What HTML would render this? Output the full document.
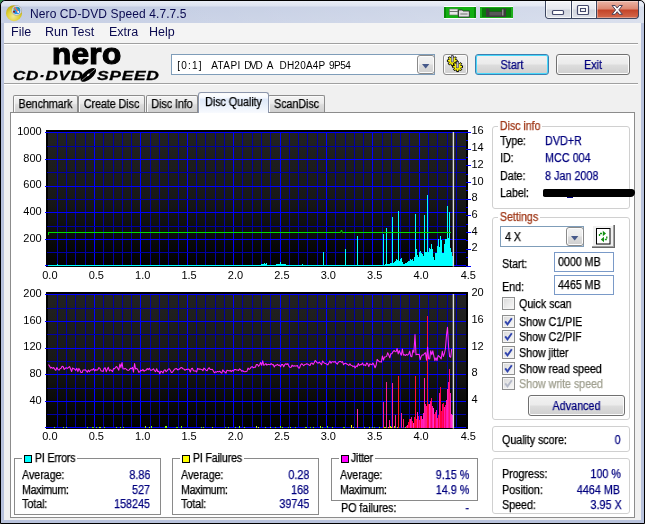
<!DOCTYPE html>
<html><head><meta charset="utf-8"><title>Nero CD-DVD Speed 4.7.7.5</title>
<style>
html,body{margin:0;padding:0;}
html{background:#fff}body{width:645px;height:524px;overflow:hidden;position:relative;background:#f0f0f0;font-family:"Liberation Sans",sans-serif;font-size:12px;color:#000;}
.abs{position:absolute;}
#frame{left:0;top:0;width:643px;height:522px;border:1px solid #000;border-radius:5px 5px 0 0;background:#b8c2dc;}
#titlebar{left:1px;top:1px;width:643px;height:22px;background:linear-gradient(to bottom,#e6ebf5 0,#d8dfee 5px,#c1cbe2 6px,#c6cfe4 21px);border-radius:5px 5px 0 0;}
#titlefade{left:1px;top:1px;width:643px;height:22px;background:linear-gradient(to right,rgba(255,255,255,0) 0,rgba(255,255,255,0.12) 40%,rgba(255,255,255,0.35) 100%);border-radius:5px 5px 0 0;}
#title{will-change:transform;left:30px;top:8px;line-height:13px;font-size:12px;color:#0a0a50;white-space:nowrap;letter-spacing:0.1px}
#client{left:4px;top:23px;width:637px;height:497px;background:#f0f0f0;}
#menubar{left:4px;top:23px;width:637px;height:20px;background:#f4f4f4;}
.menu{will-change:transform;top:25px;font-size:12.5px;color:#0a0a50;white-space:nowrap;}
.hsep{height:1px;background:#a0a0a0;border-bottom:1px solid #fff;}
.t{position:absolute;white-space:nowrap;font-size:12px;line-height:13px;letter-spacing:-0.1px;transform:scaleX(0.9);transform-origin:0 50%;will-change:transform;-webkit-text-stroke:0.25px currentColor;}
.v{color:#00007f;letter-spacing:0;}
.r{text-align:right;transform-origin:100% 50%;}
.c{text-align:center;transform-origin:50% 50%;}
.btn{letter-spacing:-0.2px;position:absolute;border:1px solid #707070;border-radius:3px;background:linear-gradient(to bottom,#f2f2f2 0,#ebebeb 48%,#dddddd 52%,#cfcfcf 100%);box-shadow:inset 0 0 0 1px #fcfcfc;text-align:center;color:#00007f;font-size:11px;box-sizing:border-box;}
.tab{letter-spacing:-0.25px;position:absolute;top:95px;height:17px;border:1px solid #8c8c8c;border-bottom:none;border-radius:2px 2px 0 0;background:linear-gradient(to bottom,#f3f3f3 0,#ebebeb 45%,#dcdcdc 55%,#d0d0d0 100%);box-shadow:inset 1px 1px 0 #fafafa;box-sizing:border-box;font-size:11px;text-align:center;line-height:16px;white-space:nowrap;}
.grp{position:absolute;border:1px solid #d0d0d0;border-radius:3px;box-sizing:border-box;}
.grp2{position:absolute;border:1px solid #8a8a8a;box-sizing:border-box;}
.gl{background:#fff;padding:0 2px;}
.edit{position:absolute;border:1px solid #7a9ac8;background:#fff;box-sizing:border-box;font-size:11px;}
.cb{position:absolute;width:11px;height:11px;border:1px solid #8e8f8f;background:linear-gradient(135deg,#d8d8d8,#fafafa);box-shadow:inset 0 0 0 1px #f4f4f4;}
.sw{position:absolute;width:8px;height:8px;border:1px solid #000;}
.lg{font-size:12px;font-weight:bold;font-style:italic;line-height:14px;color:#000;white-space:nowrap;transform-origin:0 0;letter-spacing:0.5px;-webkit-text-stroke:0.3px #000;}
</style></head><body>
<div class="abs" style="left:0;top:0;width:4px;height:4px;background:linear-gradient(135deg,#2f8a4a 0,#2f8a4a 45%,#3a6ab0 55%);"></div>
<div id="frame" class="abs"></div>
<div id="titlebar" class="abs"></div><div id="titlefade" class="abs"></div>
<!-- app icon -->
<svg class="abs" style="left:5px;top:4px" width="20" height="20" viewBox="0 0 20 20"><defs><radialGradient id="gd" cx="0.45" cy="0.7" r="0.7"><stop offset="0" stop-color="#f0e898"/><stop offset="0.55" stop-color="#dfd034"/><stop offset="1" stop-color="#b8a608"/></radialGradient></defs><circle cx="9" cy="9.200" r="8" fill="url(#gd)"/><circle cx="11.7" cy="6.400" r="4.900" fill="#e4e4e8" stroke="#a8a8ac" stroke-width=".7"/><circle cx="11.7" cy="6.400" r="3.600" fill="#2590e0"/><path d="M9.800 3.600 L13.200 8" stroke="#f07850" stroke-width="1.500" stroke-linecap="round"/><path d="M12.500 3.500l2 .3-.3 1.800z" fill="#2a9a30"/><circle cx="9" cy="7.700" r="1" fill="#901414"/><circle cx="8.600" cy="5.700" r=".7" fill="#f0e020"/><circle cx="13.200" cy="8" r=".9" fill="#fff"/></svg>
<div id="title" class="abs">Nero CD-DVD Speed 4.7.7.5</div>
<!-- caption buttons -->
<div class="abs" style="left:444px;top:6px;width:32px;height:13px;background:#12b012;border-top:1px solid #fff;border-bottom:1px solid #fff;box-sizing:border-box;box-shadow:inset 2px 0 0 #0a8a0a,inset -2px 0 0 #0a8a0a;"></div>
<svg class="abs" style="left:447px;top:8px" width="29" height="10" viewBox="0 0 24 10" preserveAspectRatio="none"><path d="M2 1h7v6H2z" fill="#e8e8e8" stroke="#707070" stroke-width=".6"/><path d="M2 3.5h7" stroke="#606060" stroke-width=".8"/><path d="M9.5 2h3l1 1h5v6h-9z" fill="#e0e0e0" stroke="#303030" stroke-width=".8"/><path d="M11 5h6v2h-6z" fill="#a8a8a8"/></svg>
<div class="abs" style="left:480px;top:6px;width:33px;height:13px;background:#0a7c0a;border:1px solid #fff;border-left:none;border-right:none;box-sizing:border-box;box-shadow:inset 2px 0 0 #1cae1c,inset -2px 0 0 #1cae1c,inset 0 1px 0 #1cae1c,inset 0 -1px 0 #1cae1c;"></div>
<svg class="abs" style="left:485px;top:8px" width="24" height="10" viewBox="0 0 24 10"><path d="M1 0.500h3.500v3h12V0.500h4.500v8.500H1z" fill="#3c3c3c"/><path d="M4.500 4h12v3.500h-12z" fill="#585858"/><path d="M17 1.5h1.5v6H17z" fill="#909090"/></svg>
<div class="abs" id="capbtns" style="left:545px;top:1px;width:94px;height:18px;border:1px solid #3c4660;border-top:none;border-radius:0 0 4px 4px;box-sizing:border-box;overflow:hidden;background:#3c4660;">
 <div class="abs" style="left:0;top:0;width:25px;height:17px;background:linear-gradient(to bottom,#f4f5f8 0,#e6e8ee 45%,#d2d6df 55%,#dfe2e9 100%);box-shadow:inset 0 0 0 1px rgba(255,255,255,.7);"></div>
 <div class="abs" style="left:26px;top:0;width:24px;height:17px;background:linear-gradient(to bottom,#f4f5f8 0,#e6e8ee 45%,#d2d6df 55%,#dfe2e9 100%);box-shadow:inset 0 0 0 1px rgba(255,255,255,.7);"></div>
 <div class="abs" style="left:51px;top:0;width:42px;height:17px;background:linear-gradient(to bottom,#eab5a6 0,#dc8a74 45%,#c4452a 55%,#d4694c 100%);box-shadow:inset 0 0 0 1px rgba(255,255,255,.35);"></div>
</div>
<svg class="abs" style="left:545px;top:0" width="94" height="19" viewBox="0 0 94 19"><rect x="7.5" y="10.5" width="11" height="4" rx="1" fill="#fff" stroke="#454a6c" stroke-width="1.2"/><rect x="32.5" y="5.500" width="11" height="9" rx="1" fill="#fff" stroke="#454a6c" stroke-width="1.2"/><rect x="35.500" y="8.500" width="5" height="3" fill="#fff" stroke="#454a6c" stroke-width="1.1"/><path d="M67 5.500h3.200l2 2.600 2-2.600h3.200l-3.600 4.400 3.600 4.400h-3.200l-2-2.600-2 2.600h-3.200l3.600-4.400z" fill="#fff" stroke="#4a4258" stroke-width="1"/></svg>
<div id="client" class="abs"></div>
<div id="menubar" class="abs"></div>
<div class="abs menu" style="left:11px">File</div>
<div class="abs menu" style="left:45px">Run Test</div>
<div class="abs menu" style="left:109px">Extra</div>
<div class="abs menu" style="left:149px">Help</div>
<div class="abs hsep" style="left:4px;top:43px;width:634px"></div>
<div class="abs hsep" style="left:4px;top:83px;width:634px"></div>

<!-- toolbar logo -->
<div class="abs" id="nero" style="left:51.5px;top:39.800px;font-size:29px;font-weight:bold;letter-spacing:0.3px;line-height:29px;color:#000;-webkit-text-stroke:1.2px #000;transform:scaleX(1.085);transform-origin:0 0;">nero</div>
<div class="abs lg" id="cd1" style="left:13px;top:69px;transform:scaleX(1.42);">CD·DVD</div>
<div class="abs lg" id="cd2" style="left:97px;top:69px;transform:scaleX(1.45);">SPEED</div>
<svg class="abs" style="left:78px;top:66px" width="20" height="18" viewBox="0 0 20 18"><g transform="rotate(-40 10.3 8.9)"><ellipse cx="10.3" cy="8.9" rx="9.4" ry="4.4" fill="#000"/><path d="M1.5 8.9 H19" stroke="#fff" stroke-width="0.6" opacity=".8"/><ellipse cx="10.3" cy="8.9" rx="1.6" ry="0.9" fill="#fff"/></g></svg>
<!-- combo -->
<div class="edit" style="left:171px;top:54px;width:264px;height:21px;border-color:#7f9db9;"></div>
<div class="abs" id="drive" style="will-change:transform;left:0;top:59px;font-size:10px;line-height:13px;white-space:nowrap;"><span class="abs" style="left:177.3px;top:0;letter-spacing:1.18px">[0:1]</span> <span class="abs" style="left:211.2px;top:0;letter-spacing:0.42px">ATAPI</span> <span class="abs" style="left:244.2px;top:0;letter-spacing:-1.31px">DVD</span> <span class="abs" style="left:266.8px;top:0;letter-spacing:0px">A</span> <span class="abs" style="left:279.5px;top:0;letter-spacing:0.21px">DH20A4P</span> <span class="abs" style="left:329px;top:0;letter-spacing:-0.52px">9P54</span></div>
<div class="btn" style="left:417px;top:55px;width:18px;height:19px;border-color:#8a8a8a;border-radius:3px;"></div>
<svg class="abs" style="left:422px;top:64px" width="8" height="5"><path d="M0 0H7.400L3.700 4.500Z" fill="#46598a"/></svg>
<div class="btn" style="left:443px;top:54px;width:25px;height:21px;border-color:#8c8c8c;"></div>
<svg class="abs" style="left:444px;top:54px" width="24" height="21" viewBox="0 0 24 21"><polygon points="13.2,5.9 13.2,7.7 12.0,7.7 11.5,8.8 12.4,9.7 11.2,10.9 10.3,10.0 9.2,10.5 9.2,11.7 7.4,11.7 7.4,10.5 6.3,10.0 5.4,10.9 4.2,9.7 5.1,8.8 4.6,7.7 3.4,7.7 3.4,5.9 4.6,5.9 5.1,4.8 4.2,3.9 5.4,2.7 6.3,3.6 7.4,3.1 7.4,1.9 9.2,1.9 9.2,3.1 10.3,3.6 11.2,2.7 12.4,3.9 11.5,4.8 12.0,5.9" fill="#000" stroke="#000" stroke-width="1" stroke-linejoin="round"/><polygon points="12.7,6.0 12.7,7.6 11.4,7.5 11.0,8.5 12.0,9.4 10.9,10.5 10.0,9.5 9.0,9.9 9.1,11.2 7.5,11.2 7.6,9.9 6.6,9.5 5.7,10.5 4.6,9.4 5.6,8.5 5.2,7.5 3.9,7.6 3.9,6.0 5.2,6.1 5.6,5.1 4.6,4.2 5.7,3.1 6.6,4.1 7.6,3.7 7.5,2.4 9.1,2.4 9.0,3.7 10.0,4.1 10.9,3.1 12.0,4.2 11.0,5.1 11.4,6.1" fill="#f6f010"/><rect x="7.2" y="1.8" width="2.200" height="6.200" fill="#b8b8d0" stroke="#282838" stroke-width=".5"/><polygon points="18.5,11.8 18.5,13.6 17.3,13.6 16.8,14.7 17.7,15.6 16.5,16.8 15.6,15.9 14.5,16.4 14.5,17.6 12.7,17.6 12.7,16.4 11.6,15.9 10.7,16.8 9.5,15.6 10.4,14.7 9.9,13.6 8.7,13.6 8.7,11.8 9.9,11.8 10.4,10.7 9.5,9.8 10.7,8.6 11.6,9.5 12.7,9.0 12.7,7.8 14.5,7.8 14.5,9.0 15.6,9.5 16.5,8.6 17.7,9.8 16.8,10.7 17.3,11.8" fill="#000" stroke="#000" stroke-width="1" stroke-linejoin="round"/><polygon points="18.0,11.9 18.0,13.5 16.7,13.4 16.3,14.4 17.3,15.3 16.2,16.4 15.3,15.4 14.3,15.8 14.4,17.1 12.8,17.1 12.9,15.8 11.9,15.4 11.0,16.4 9.9,15.3 10.9,14.4 10.5,13.4 9.2,13.5 9.2,11.9 10.5,12.0 10.9,11.0 9.9,10.1 11.0,9.0 11.9,10.0 12.9,9.6 12.8,8.3 14.4,8.3 14.3,9.6 15.3,10.0 16.2,9.0 17.3,10.1 16.3,11.0 16.7,12.0" fill="#f6f010"/><rect x="12.5" y="7.7" width="2.200" height="6.200" fill="#b8b8d0" stroke="#282838" stroke-width=".5"/></svg>
<div class="btn" style="left:475px;top:54px;width:74px;height:21px;border-color:#3c7fb1;box-shadow:inset 0 0 0 1px #48d8fb;"></div><div class="t v c" style="left:475px;width:74px;top:59px;">Start</div>
<div class="btn" style="left:556px;top:54px;width:74px;height:21px;"></div><div class="t v c" style="left:556px;width:74px;top:59px;">Exit</div>
<!-- tabs -->
<div class="tab" style="left:13px;width:65px;"></div><div class="t c" style="left:13px;width:65px;top:98px;">Benchmark</div>
<div class="tab" style="left:78px;width:67px;"></div><div class="t c" style="left:78px;width:67px;top:98px;">Create Disc</div>
<div class="tab" style="left:146px;width:52px;"></div><div class="t c" style="left:146px;width:52px;top:98px;">Disc Info</div>
<div class="tab" style="left:268px;width:57px;"></div><div class="t c" style="left:268px;width:57px;top:98px;">ScanDisc</div>
<div class="abs" id="pane" style="left:10px;top:112px;width:625px;height:406px;border:1px solid #8c8c8c;box-sizing:border-box;background:#fff;"></div>
<div class="tab" style="left:198px;top:92px;width:71px;height:21px;background:linear-gradient(to bottom,#fff 0,#f6f9fe 22%,#dfe9f9 32%,#e8f0fb 60%,#f8fafe 100%);border-color:#8c96ac;border-radius:3px 3px 0 0;"></div><div class="t c" style="left:198px;width:71px;top:96px;">Disc Quality</div>
<svg id="charts" width="645" height="524" viewBox="0 0 645 524" style="position:absolute;left:0;top:0;will-change:transform" font-family="Liberation Sans, sans-serif" font-size="11" fill="#000">
<defs><linearGradient id="g1" x1="0" y1="0" x2="0" y2="1"><stop offset="0" stop-color="#222"/><stop offset="0.5" stop-color="#181818"/><stop offset="1" stop-color="#000"/></linearGradient></defs>
<g shape-rendering="crispEdges">
<rect x="46" y="130" width="422" height="137" fill="#000"/>
<rect x="48" y="132" width="418" height="134" fill="url(#g1)"/>
<rect x="57" y="132" width="1" height="134" fill="#0000a4"/>
<rect x="66" y="132" width="1" height="134" fill="#0000a4"/>
<rect x="75" y="132" width="1" height="134" fill="#0000a4"/>
<rect x="85" y="132" width="1" height="134" fill="#0000a4"/>
<rect x="94" y="132" width="1" height="134" fill="#0000ff"/>
<rect x="103" y="132" width="1" height="134" fill="#0000a4"/>
<rect x="113" y="132" width="1" height="134" fill="#0000a4"/>
<rect x="122" y="132" width="1" height="134" fill="#0000a4"/>
<rect x="131" y="132" width="1" height="134" fill="#0000a4"/>
<rect x="140" y="132" width="1" height="134" fill="#0000ff"/>
<rect x="150" y="132" width="1" height="134" fill="#0000a4"/>
<rect x="159" y="132" width="1" height="134" fill="#0000a4"/>
<rect x="168" y="132" width="1" height="134" fill="#0000a4"/>
<rect x="178" y="132" width="1" height="134" fill="#0000a4"/>
<rect x="187" y="132" width="1" height="134" fill="#0000ff"/>
<rect x="196" y="132" width="1" height="134" fill="#0000a4"/>
<rect x="205" y="132" width="1" height="134" fill="#0000a4"/>
<rect x="215" y="132" width="1" height="134" fill="#0000a4"/>
<rect x="224" y="132" width="1" height="134" fill="#0000a4"/>
<rect x="233" y="132" width="1" height="134" fill="#0000ff"/>
<rect x="242" y="132" width="1" height="134" fill="#0000a4"/>
<rect x="252" y="132" width="1" height="134" fill="#0000a4"/>
<rect x="261" y="132" width="1" height="134" fill="#0000a4"/>
<rect x="270" y="132" width="1" height="134" fill="#0000a4"/>
<rect x="280" y="132" width="1" height="134" fill="#0000ff"/>
<rect x="289" y="132" width="1" height="134" fill="#0000a4"/>
<rect x="298" y="132" width="1" height="134" fill="#0000a4"/>
<rect x="307" y="132" width="1" height="134" fill="#0000a4"/>
<rect x="317" y="132" width="1" height="134" fill="#0000a4"/>
<rect x="326" y="132" width="1" height="134" fill="#0000ff"/>
<rect x="335" y="132" width="1" height="134" fill="#0000a4"/>
<rect x="345" y="132" width="1" height="134" fill="#0000a4"/>
<rect x="354" y="132" width="1" height="134" fill="#0000a4"/>
<rect x="363" y="132" width="1" height="134" fill="#0000a4"/>
<rect x="372" y="132" width="1" height="134" fill="#0000ff"/>
<rect x="382" y="132" width="1" height="134" fill="#0000a4"/>
<rect x="391" y="132" width="1" height="134" fill="#0000a4"/>
<rect x="400" y="132" width="1" height="134" fill="#0000a4"/>
<rect x="409" y="132" width="1" height="134" fill="#0000a4"/>
<rect x="419" y="132" width="1" height="134" fill="#0000ff"/>
<rect x="428" y="132" width="1" height="134" fill="#0000a4"/>
<rect x="437" y="132" width="1" height="134" fill="#0000a4"/>
<rect x="447" y="132" width="1" height="134" fill="#0000a4"/>
<rect x="456" y="132" width="1" height="134" fill="#0000a4"/>
<rect x="45" y="265" width="421" height="1" fill="#0000ff"/>
<rect x="47" y="252" width="419" height="1" fill="#0000a4"/>
<rect x="45" y="239" width="421" height="1" fill="#0000ff"/>
<rect x="47" y="226" width="419" height="1" fill="#0000a4"/>
<rect x="45" y="212" width="421" height="1" fill="#0000ff"/>
<rect x="47" y="199" width="419" height="1" fill="#0000a4"/>
<rect x="45" y="186" width="421" height="1" fill="#0000ff"/>
<rect x="47" y="172" width="419" height="1" fill="#0000a4"/>
<rect x="45" y="159" width="421" height="1" fill="#0000ff"/>
<rect x="47" y="146" width="419" height="1" fill="#0000a4"/>
<rect x="45" y="132" width="421" height="1" fill="#0000ff"/>
<rect x="46" y="292" width="422" height="137" fill="#000"/>
<rect x="48" y="294" width="418" height="134" fill="url(#g1)"/>
<rect x="57" y="294" width="1" height="134" fill="#0000a4"/>
<rect x="66" y="294" width="1" height="134" fill="#0000a4"/>
<rect x="75" y="294" width="1" height="134" fill="#0000a4"/>
<rect x="85" y="294" width="1" height="134" fill="#0000a4"/>
<rect x="94" y="294" width="1" height="134" fill="#0000ff"/>
<rect x="103" y="294" width="1" height="134" fill="#0000a4"/>
<rect x="113" y="294" width="1" height="134" fill="#0000a4"/>
<rect x="122" y="294" width="1" height="134" fill="#0000a4"/>
<rect x="131" y="294" width="1" height="134" fill="#0000a4"/>
<rect x="140" y="294" width="1" height="134" fill="#0000ff"/>
<rect x="150" y="294" width="1" height="134" fill="#0000a4"/>
<rect x="159" y="294" width="1" height="134" fill="#0000a4"/>
<rect x="168" y="294" width="1" height="134" fill="#0000a4"/>
<rect x="178" y="294" width="1" height="134" fill="#0000a4"/>
<rect x="187" y="294" width="1" height="134" fill="#0000ff"/>
<rect x="196" y="294" width="1" height="134" fill="#0000a4"/>
<rect x="205" y="294" width="1" height="134" fill="#0000a4"/>
<rect x="215" y="294" width="1" height="134" fill="#0000a4"/>
<rect x="224" y="294" width="1" height="134" fill="#0000a4"/>
<rect x="233" y="294" width="1" height="134" fill="#0000ff"/>
<rect x="242" y="294" width="1" height="134" fill="#0000a4"/>
<rect x="252" y="294" width="1" height="134" fill="#0000a4"/>
<rect x="261" y="294" width="1" height="134" fill="#0000a4"/>
<rect x="270" y="294" width="1" height="134" fill="#0000a4"/>
<rect x="280" y="294" width="1" height="134" fill="#0000ff"/>
<rect x="289" y="294" width="1" height="134" fill="#0000a4"/>
<rect x="298" y="294" width="1" height="134" fill="#0000a4"/>
<rect x="307" y="294" width="1" height="134" fill="#0000a4"/>
<rect x="317" y="294" width="1" height="134" fill="#0000a4"/>
<rect x="326" y="294" width="1" height="134" fill="#0000ff"/>
<rect x="335" y="294" width="1" height="134" fill="#0000a4"/>
<rect x="345" y="294" width="1" height="134" fill="#0000a4"/>
<rect x="354" y="294" width="1" height="134" fill="#0000a4"/>
<rect x="363" y="294" width="1" height="134" fill="#0000a4"/>
<rect x="372" y="294" width="1" height="134" fill="#0000ff"/>
<rect x="382" y="294" width="1" height="134" fill="#0000a4"/>
<rect x="391" y="294" width="1" height="134" fill="#0000a4"/>
<rect x="400" y="294" width="1" height="134" fill="#0000a4"/>
<rect x="409" y="294" width="1" height="134" fill="#0000a4"/>
<rect x="419" y="294" width="1" height="134" fill="#0000ff"/>
<rect x="428" y="294" width="1" height="134" fill="#0000a4"/>
<rect x="437" y="294" width="1" height="134" fill="#0000a4"/>
<rect x="447" y="294" width="1" height="134" fill="#0000a4"/>
<rect x="456" y="294" width="1" height="134" fill="#0000a4"/>
<rect x="45" y="427" width="421" height="1" fill="#0000ff"/>
<rect x="47" y="414" width="419" height="1" fill="#0000a4"/>
<rect x="45" y="401" width="421" height="1" fill="#0000ff"/>
<rect x="47" y="388" width="419" height="1" fill="#0000a4"/>
<rect x="45" y="374" width="421" height="1" fill="#0000ff"/>
<rect x="47" y="361" width="419" height="1" fill="#0000a4"/>
<rect x="45" y="348" width="421" height="1" fill="#0000ff"/>
<rect x="47" y="334" width="419" height="1" fill="#0000a4"/>
<rect x="45" y="321" width="421" height="1" fill="#0000ff"/>
<rect x="47" y="308" width="419" height="1" fill="#0000a4"/>
<rect x="45" y="294" width="421" height="1" fill="#0000ff"/>
<rect x="48" y="265" width="1" height="1" fill="#00ffff"/>
<rect x="49" y="265" width="1" height="1" fill="#00ffff"/>
<rect x="50" y="265" width="1" height="1" fill="#00ffff"/>
<rect x="51" y="265" width="1" height="1" fill="#00ffff"/>
<rect x="52" y="265" width="1" height="1" fill="#00ffff"/>
<rect x="53" y="265" width="1" height="1" fill="#00ffff"/>
<rect x="54" y="265" width="1" height="1" fill="#00ffff"/>
<rect x="55" y="265" width="1" height="1" fill="#00ffff"/>
<rect x="56" y="265" width="1" height="1" fill="#00ffff"/>
<rect x="57" y="264" width="1" height="2" fill="#00ffff"/>
<rect x="58" y="265" width="1" height="1" fill="#00ffff"/>
<rect x="59" y="265" width="1" height="1" fill="#00ffff"/>
<rect x="60" y="265" width="1" height="1" fill="#00ffff"/>
<rect x="61" y="265" width="1" height="1" fill="#00ffff"/>
<rect x="62" y="265" width="1" height="1" fill="#00ffff"/>
<rect x="63" y="265" width="1" height="1" fill="#00ffff"/>
<rect x="64" y="265" width="1" height="1" fill="#00ffff"/>
<rect x="65" y="265" width="1" height="1" fill="#00ffff"/>
<rect x="66" y="265" width="1" height="1" fill="#00ffff"/>
<rect x="67" y="265" width="1" height="1" fill="#00ffff"/>
<rect x="68" y="265" width="1" height="1" fill="#00ffff"/>
<rect x="69" y="265" width="1" height="1" fill="#00ffff"/>
<rect x="70" y="265" width="1" height="1" fill="#00ffff"/>
<rect x="71" y="265" width="1" height="1" fill="#00ffff"/>
<rect x="72" y="265" width="1" height="1" fill="#00ffff"/>
<rect x="73" y="265" width="1" height="1" fill="#00ffff"/>
<rect x="74" y="265" width="1" height="1" fill="#00ffff"/>
<rect x="75" y="265" width="1" height="1" fill="#00ffff"/>
<rect x="76" y="265" width="1" height="1" fill="#00ffff"/>
<rect x="77" y="265" width="1" height="1" fill="#00ffff"/>
<rect x="78" y="265" width="1" height="1" fill="#00ffff"/>
<rect x="79" y="265" width="1" height="1" fill="#00ffff"/>
<rect x="80" y="265" width="1" height="1" fill="#00ffff"/>
<rect x="81" y="265" width="1" height="1" fill="#00ffff"/>
<rect x="82" y="265" width="1" height="1" fill="#00ffff"/>
<rect x="83" y="265" width="1" height="1" fill="#00ffff"/>
<rect x="84" y="265" width="1" height="1" fill="#00ffff"/>
<rect x="85" y="265" width="1" height="1" fill="#00ffff"/>
<rect x="86" y="265" width="1" height="1" fill="#00ffff"/>
<rect x="87" y="265" width="1" height="1" fill="#00ffff"/>
<rect x="88" y="265" width="1" height="1" fill="#00ffff"/>
<rect x="89" y="265" width="1" height="1" fill="#00ffff"/>
<rect x="90" y="265" width="1" height="1" fill="#00ffff"/>
<rect x="91" y="265" width="1" height="1" fill="#00ffff"/>
<rect x="92" y="265" width="1" height="1" fill="#00ffff"/>
<rect x="93" y="265" width="1" height="1" fill="#00ffff"/>
<rect x="94" y="265" width="1" height="1" fill="#00ffff"/>
<rect x="95" y="265" width="1" height="1" fill="#00ffff"/>
<rect x="96" y="265" width="1" height="1" fill="#00ffff"/>
<rect x="97" y="265" width="1" height="1" fill="#00ffff"/>
<rect x="98" y="265" width="1" height="1" fill="#00ffff"/>
<rect x="99" y="265" width="1" height="1" fill="#00ffff"/>
<rect x="100" y="265" width="1" height="1" fill="#00ffff"/>
<rect x="101" y="265" width="1" height="1" fill="#00ffff"/>
<rect x="102" y="265" width="1" height="1" fill="#00ffff"/>
<rect x="103" y="265" width="1" height="1" fill="#00ffff"/>
<rect x="104" y="265" width="1" height="1" fill="#00ffff"/>
<rect x="105" y="265" width="1" height="1" fill="#00ffff"/>
<rect x="106" y="265" width="1" height="1" fill="#00ffff"/>
<rect x="107" y="265" width="1" height="1" fill="#00ffff"/>
<rect x="108" y="265" width="1" height="1" fill="#00ffff"/>
<rect x="109" y="265" width="1" height="1" fill="#00ffff"/>
<rect x="110" y="265" width="1" height="1" fill="#00ffff"/>
<rect x="111" y="265" width="1" height="1" fill="#00ffff"/>
<rect x="112" y="265" width="1" height="1" fill="#00ffff"/>
<rect x="113" y="265" width="1" height="1" fill="#00ffff"/>
<rect x="114" y="265" width="1" height="1" fill="#00ffff"/>
<rect x="115" y="265" width="1" height="1" fill="#00ffff"/>
<rect x="116" y="265" width="1" height="1" fill="#00ffff"/>
<rect x="117" y="265" width="1" height="1" fill="#00ffff"/>
<rect x="118" y="265" width="1" height="1" fill="#00ffff"/>
<rect x="119" y="265" width="1" height="1" fill="#00ffff"/>
<rect x="120" y="265" width="1" height="1" fill="#00ffff"/>
<rect x="121" y="265" width="1" height="1" fill="#00ffff"/>
<rect x="122" y="265" width="1" height="1" fill="#00ffff"/>
<rect x="123" y="265" width="1" height="1" fill="#00ffff"/>
<rect x="124" y="265" width="1" height="1" fill="#00ffff"/>
<rect x="125" y="265" width="1" height="1" fill="#00ffff"/>
<rect x="126" y="265" width="1" height="1" fill="#00ffff"/>
<rect x="127" y="265" width="1" height="1" fill="#00ffff"/>
<rect x="128" y="265" width="1" height="1" fill="#00ffff"/>
<rect x="129" y="265" width="1" height="1" fill="#00ffff"/>
<rect x="130" y="265" width="1" height="1" fill="#00ffff"/>
<rect x="131" y="265" width="1" height="1" fill="#00ffff"/>
<rect x="132" y="265" width="1" height="1" fill="#00ffff"/>
<rect x="133" y="265" width="1" height="1" fill="#00ffff"/>
<rect x="134" y="265" width="1" height="1" fill="#00ffff"/>
<rect x="135" y="265" width="1" height="1" fill="#00ffff"/>
<rect x="136" y="265" width="1" height="1" fill="#00ffff"/>
<rect x="137" y="265" width="1" height="1" fill="#00ffff"/>
<rect x="138" y="265" width="1" height="1" fill="#00ffff"/>
<rect x="139" y="265" width="1" height="1" fill="#00ffff"/>
<rect x="140" y="265" width="1" height="1" fill="#00ffff"/>
<rect x="141" y="265" width="1" height="1" fill="#00ffff"/>
<rect x="142" y="265" width="1" height="1" fill="#00ffff"/>
<rect x="143" y="265" width="1" height="1" fill="#00ffff"/>
<rect x="144" y="265" width="1" height="1" fill="#00ffff"/>
<rect x="145" y="265" width="1" height="1" fill="#00ffff"/>
<rect x="146" y="265" width="1" height="1" fill="#00ffff"/>
<rect x="147" y="265" width="1" height="1" fill="#00ffff"/>
<rect x="148" y="265" width="1" height="1" fill="#00ffff"/>
<rect x="149" y="265" width="1" height="1" fill="#00ffff"/>
<rect x="150" y="265" width="1" height="1" fill="#00ffff"/>
<rect x="151" y="265" width="1" height="1" fill="#00ffff"/>
<rect x="152" y="265" width="1" height="1" fill="#00ffff"/>
<rect x="153" y="265" width="1" height="1" fill="#00ffff"/>
<rect x="154" y="265" width="1" height="1" fill="#00ffff"/>
<rect x="155" y="265" width="1" height="1" fill="#00ffff"/>
<rect x="156" y="265" width="1" height="1" fill="#00ffff"/>
<rect x="157" y="265" width="1" height="1" fill="#00ffff"/>
<rect x="158" y="265" width="1" height="1" fill="#00ffff"/>
<rect x="159" y="265" width="1" height="1" fill="#00ffff"/>
<rect x="160" y="265" width="1" height="1" fill="#00ffff"/>
<rect x="161" y="265" width="1" height="1" fill="#00ffff"/>
<rect x="162" y="265" width="1" height="1" fill="#00ffff"/>
<rect x="163" y="265" width="1" height="1" fill="#00ffff"/>
<rect x="164" y="265" width="1" height="1" fill="#00ffff"/>
<rect x="165" y="265" width="1" height="1" fill="#00ffff"/>
<rect x="166" y="265" width="1" height="1" fill="#00ffff"/>
<rect x="167" y="265" width="1" height="1" fill="#00ffff"/>
<rect x="168" y="265" width="1" height="1" fill="#00ffff"/>
<rect x="169" y="265" width="1" height="1" fill="#00ffff"/>
<rect x="170" y="265" width="1" height="1" fill="#00ffff"/>
<rect x="171" y="265" width="1" height="1" fill="#00ffff"/>
<rect x="172" y="265" width="1" height="1" fill="#00ffff"/>
<rect x="173" y="265" width="1" height="1" fill="#00ffff"/>
<rect x="174" y="265" width="1" height="1" fill="#00ffff"/>
<rect x="175" y="265" width="1" height="1" fill="#00ffff"/>
<rect x="176" y="265" width="1" height="1" fill="#00ffff"/>
<rect x="177" y="265" width="1" height="1" fill="#00ffff"/>
<rect x="178" y="265" width="1" height="1" fill="#00ffff"/>
<rect x="179" y="265" width="1" height="1" fill="#00ffff"/>
<rect x="180" y="265" width="1" height="1" fill="#00ffff"/>
<rect x="181" y="265" width="1" height="1" fill="#00ffff"/>
<rect x="182" y="265" width="1" height="1" fill="#00ffff"/>
<rect x="183" y="265" width="1" height="1" fill="#00ffff"/>
<rect x="184" y="265" width="1" height="1" fill="#00ffff"/>
<rect x="185" y="265" width="1" height="1" fill="#00ffff"/>
<rect x="186" y="265" width="1" height="1" fill="#00ffff"/>
<rect x="187" y="265" width="1" height="1" fill="#00ffff"/>
<rect x="188" y="265" width="1" height="1" fill="#00ffff"/>
<rect x="189" y="265" width="1" height="1" fill="#00ffff"/>
<rect x="190" y="265" width="1" height="1" fill="#00ffff"/>
<rect x="191" y="265" width="1" height="1" fill="#00ffff"/>
<rect x="192" y="265" width="1" height="1" fill="#00ffff"/>
<rect x="193" y="265" width="1" height="1" fill="#00ffff"/>
<rect x="194" y="265" width="1" height="1" fill="#00ffff"/>
<rect x="195" y="265" width="1" height="1" fill="#00ffff"/>
<rect x="196" y="265" width="1" height="1" fill="#00ffff"/>
<rect x="197" y="265" width="1" height="1" fill="#00ffff"/>
<rect x="198" y="265" width="1" height="1" fill="#00ffff"/>
<rect x="199" y="265" width="1" height="1" fill="#00ffff"/>
<rect x="200" y="265" width="1" height="1" fill="#00ffff"/>
<rect x="201" y="265" width="1" height="1" fill="#00ffff"/>
<rect x="202" y="265" width="1" height="1" fill="#00ffff"/>
<rect x="203" y="265" width="1" height="1" fill="#00ffff"/>
<rect x="204" y="265" width="1" height="1" fill="#00ffff"/>
<rect x="205" y="265" width="1" height="1" fill="#00ffff"/>
<rect x="206" y="265" width="1" height="1" fill="#00ffff"/>
<rect x="207" y="265" width="1" height="1" fill="#00ffff"/>
<rect x="208" y="265" width="1" height="1" fill="#00ffff"/>
<rect x="209" y="265" width="1" height="1" fill="#00ffff"/>
<rect x="210" y="265" width="1" height="1" fill="#00ffff"/>
<rect x="211" y="265" width="1" height="1" fill="#00ffff"/>
<rect x="212" y="265" width="1" height="1" fill="#00ffff"/>
<rect x="213" y="265" width="1" height="1" fill="#00ffff"/>
<rect x="214" y="265" width="1" height="1" fill="#00ffff"/>
<rect x="215" y="265" width="1" height="1" fill="#00ffff"/>
<rect x="216" y="265" width="1" height="1" fill="#00ffff"/>
<rect x="217" y="265" width="1" height="1" fill="#00ffff"/>
<rect x="218" y="265" width="1" height="1" fill="#00ffff"/>
<rect x="219" y="265" width="1" height="1" fill="#00ffff"/>
<rect x="220" y="265" width="1" height="1" fill="#00ffff"/>
<rect x="221" y="265" width="1" height="1" fill="#00ffff"/>
<rect x="222" y="265" width="1" height="1" fill="#00ffff"/>
<rect x="223" y="265" width="1" height="1" fill="#00ffff"/>
<rect x="224" y="265" width="1" height="1" fill="#00ffff"/>
<rect x="225" y="265" width="1" height="1" fill="#00ffff"/>
<rect x="226" y="265" width="1" height="1" fill="#00ffff"/>
<rect x="227" y="265" width="1" height="1" fill="#00ffff"/>
<rect x="228" y="265" width="1" height="1" fill="#00ffff"/>
<rect x="229" y="265" width="1" height="1" fill="#00ffff"/>
<rect x="230" y="265" width="1" height="1" fill="#00ffff"/>
<rect x="231" y="265" width="1" height="1" fill="#00ffff"/>
<rect x="232" y="265" width="1" height="1" fill="#00ffff"/>
<rect x="233" y="265" width="1" height="1" fill="#00ffff"/>
<rect x="234" y="265" width="1" height="1" fill="#00ffff"/>
<rect x="235" y="265" width="1" height="1" fill="#00ffff"/>
<rect x="236" y="265" width="1" height="1" fill="#00ffff"/>
<rect x="237" y="265" width="1" height="1" fill="#00ffff"/>
<rect x="238" y="265" width="1" height="1" fill="#00ffff"/>
<rect x="239" y="265" width="1" height="1" fill="#00ffff"/>
<rect x="240" y="265" width="1" height="1" fill="#00ffff"/>
<rect x="241" y="265" width="1" height="1" fill="#00ffff"/>
<rect x="242" y="265" width="1" height="1" fill="#00ffff"/>
<rect x="243" y="265" width="1" height="1" fill="#00ffff"/>
<rect x="244" y="265" width="1" height="1" fill="#00ffff"/>
<rect x="245" y="265" width="1" height="1" fill="#00ffff"/>
<rect x="246" y="265" width="1" height="1" fill="#00ffff"/>
<rect x="247" y="265" width="1" height="1" fill="#00ffff"/>
<rect x="248" y="265" width="1" height="1" fill="#00ffff"/>
<rect x="249" y="265" width="1" height="1" fill="#00ffff"/>
<rect x="250" y="265" width="1" height="1" fill="#00ffff"/>
<rect x="251" y="265" width="1" height="1" fill="#00ffff"/>
<rect x="252" y="265" width="1" height="1" fill="#00ffff"/>
<rect x="253" y="265" width="1" height="1" fill="#00ffff"/>
<rect x="254" y="265" width="1" height="1" fill="#00ffff"/>
<rect x="255" y="265" width="1" height="1" fill="#00ffff"/>
<rect x="256" y="265" width="1" height="1" fill="#00ffff"/>
<rect x="257" y="265" width="1" height="1" fill="#00ffff"/>
<rect x="258" y="265" width="1" height="1" fill="#00ffff"/>
<rect x="259" y="265" width="1" height="1" fill="#00ffff"/>
<rect x="260" y="265" width="1" height="1" fill="#00ffff"/>
<rect x="261" y="264" width="1" height="2" fill="#00ffff"/>
<rect x="262" y="264" width="1" height="2" fill="#00ffff"/>
<rect x="263" y="264" width="1" height="2" fill="#00ffff"/>
<rect x="264" y="263" width="1" height="3" fill="#00ffff"/>
<rect x="265" y="264" width="1" height="2" fill="#00ffff"/>
<rect x="266" y="263" width="1" height="3" fill="#00ffff"/>
<rect x="267" y="265" width="1" height="1" fill="#00ffff"/>
<rect x="268" y="265" width="1" height="1" fill="#00ffff"/>
<rect x="269" y="265" width="1" height="1" fill="#00ffff"/>
<rect x="270" y="265" width="1" height="1" fill="#00ffff"/>
<rect x="271" y="265" width="1" height="1" fill="#00ffff"/>
<rect x="272" y="265" width="1" height="1" fill="#00ffff"/>
<rect x="273" y="265" width="1" height="1" fill="#00ffff"/>
<rect x="274" y="265" width="1" height="1" fill="#00ffff"/>
<rect x="275" y="265" width="1" height="1" fill="#00ffff"/>
<rect x="276" y="264" width="1" height="2" fill="#00ffff"/>
<rect x="277" y="264" width="1" height="2" fill="#00ffff"/>
<rect x="278" y="264" width="1" height="2" fill="#00ffff"/>
<rect x="279" y="264" width="1" height="2" fill="#00ffff"/>
<rect x="280" y="262" width="1" height="4" fill="#00ffff"/>
<rect x="281" y="264" width="1" height="2" fill="#00ffff"/>
<rect x="282" y="264" width="1" height="2" fill="#00ffff"/>
<rect x="283" y="264" width="1" height="2" fill="#00ffff"/>
<rect x="284" y="264" width="1" height="2" fill="#00ffff"/>
<rect x="285" y="264" width="1" height="2" fill="#00ffff"/>
<rect x="286" y="265" width="1" height="1" fill="#00ffff"/>
<rect x="287" y="265" width="1" height="1" fill="#00ffff"/>
<rect x="288" y="265" width="1" height="1" fill="#00ffff"/>
<rect x="289" y="265" width="1" height="1" fill="#00ffff"/>
<rect x="290" y="265" width="1" height="1" fill="#00ffff"/>
<rect x="291" y="265" width="1" height="1" fill="#00ffff"/>
<rect x="292" y="265" width="1" height="1" fill="#00ffff"/>
<rect x="293" y="265" width="1" height="1" fill="#00ffff"/>
<rect x="294" y="265" width="1" height="1" fill="#00ffff"/>
<rect x="295" y="265" width="1" height="1" fill="#00ffff"/>
<rect x="296" y="265" width="1" height="1" fill="#00ffff"/>
<rect x="297" y="265" width="1" height="1" fill="#00ffff"/>
<rect x="298" y="265" width="1" height="1" fill="#00ffff"/>
<rect x="299" y="265" width="1" height="1" fill="#00ffff"/>
<rect x="300" y="265" width="1" height="1" fill="#00ffff"/>
<rect x="301" y="265" width="1" height="1" fill="#00ffff"/>
<rect x="302" y="264" width="1" height="2" fill="#00ffff"/>
<rect x="303" y="265" width="1" height="1" fill="#00ffff"/>
<rect x="304" y="265" width="1" height="1" fill="#00ffff"/>
<rect x="305" y="265" width="1" height="1" fill="#00ffff"/>
<rect x="306" y="265" width="1" height="1" fill="#00ffff"/>
<rect x="307" y="265" width="1" height="1" fill="#00ffff"/>
<rect x="308" y="265" width="1" height="1" fill="#00ffff"/>
<rect x="309" y="265" width="1" height="1" fill="#00ffff"/>
<rect x="310" y="265" width="1" height="1" fill="#00ffff"/>
<rect x="311" y="265" width="1" height="1" fill="#00ffff"/>
<rect x="312" y="265" width="1" height="1" fill="#00ffff"/>
<rect x="313" y="265" width="1" height="1" fill="#00ffff"/>
<rect x="314" y="265" width="1" height="1" fill="#00ffff"/>
<rect x="315" y="265" width="1" height="1" fill="#00ffff"/>
<rect x="316" y="265" width="1" height="1" fill="#00ffff"/>
<rect x="317" y="265" width="1" height="1" fill="#00ffff"/>
<rect x="318" y="265" width="1" height="1" fill="#00ffff"/>
<rect x="319" y="265" width="1" height="1" fill="#00ffff"/>
<rect x="320" y="265" width="1" height="1" fill="#00ffff"/>
<rect x="321" y="265" width="1" height="1" fill="#00ffff"/>
<rect x="322" y="265" width="1" height="1" fill="#00ffff"/>
<rect x="323" y="252" width="1" height="14" fill="#00ffff"/>
<rect x="324" y="265" width="1" height="1" fill="#00ffff"/>
<rect x="325" y="265" width="1" height="1" fill="#00ffff"/>
<rect x="326" y="265" width="1" height="1" fill="#00ffff"/>
<rect x="327" y="265" width="1" height="1" fill="#00ffff"/>
<rect x="328" y="265" width="1" height="1" fill="#00ffff"/>
<rect x="329" y="265" width="1" height="1" fill="#00ffff"/>
<rect x="330" y="265" width="1" height="1" fill="#00ffff"/>
<rect x="331" y="265" width="1" height="1" fill="#00ffff"/>
<rect x="332" y="265" width="1" height="1" fill="#00ffff"/>
<rect x="333" y="265" width="1" height="1" fill="#00ffff"/>
<rect x="334" y="265" width="1" height="1" fill="#00ffff"/>
<rect x="335" y="265" width="1" height="1" fill="#00ffff"/>
<rect x="336" y="265" width="1" height="1" fill="#00ffff"/>
<rect x="337" y="265" width="1" height="1" fill="#00ffff"/>
<rect x="338" y="265" width="1" height="1" fill="#00ffff"/>
<rect x="339" y="265" width="1" height="1" fill="#00ffff"/>
<rect x="340" y="265" width="1" height="1" fill="#00ffff"/>
<rect x="341" y="265" width="1" height="1" fill="#00ffff"/>
<rect x="342" y="265" width="1" height="1" fill="#00ffff"/>
<rect x="343" y="265" width="1" height="1" fill="#00ffff"/>
<rect x="344" y="265" width="1" height="1" fill="#00ffff"/>
<rect x="345" y="249" width="1" height="17" fill="#00ffff"/>
<rect x="346" y="265" width="1" height="1" fill="#00ffff"/>
<rect x="347" y="265" width="1" height="1" fill="#00ffff"/>
<rect x="348" y="265" width="1" height="1" fill="#00ffff"/>
<rect x="349" y="265" width="1" height="1" fill="#00ffff"/>
<rect x="350" y="265" width="1" height="1" fill="#00ffff"/>
<rect x="351" y="265" width="1" height="1" fill="#00ffff"/>
<rect x="352" y="265" width="1" height="1" fill="#00ffff"/>
<rect x="353" y="265" width="1" height="1" fill="#00ffff"/>
<rect x="354" y="265" width="1" height="1" fill="#00ffff"/>
<rect x="355" y="265" width="1" height="1" fill="#00ffff"/>
<rect x="356" y="265" width="1" height="1" fill="#00ffff"/>
<rect x="357" y="236" width="1" height="30" fill="#00ffff"/>
<rect x="358" y="265" width="1" height="1" fill="#00ffff"/>
<rect x="359" y="265" width="1" height="1" fill="#00ffff"/>
<rect x="360" y="265" width="1" height="1" fill="#00ffff"/>
<rect x="361" y="265" width="1" height="1" fill="#00ffff"/>
<rect x="362" y="265" width="1" height="1" fill="#00ffff"/>
<rect x="363" y="265" width="1" height="1" fill="#00ffff"/>
<rect x="364" y="265" width="1" height="1" fill="#00ffff"/>
<rect x="365" y="265" width="1" height="1" fill="#00ffff"/>
<rect x="366" y="265" width="1" height="1" fill="#00ffff"/>
<rect x="367" y="265" width="1" height="1" fill="#00ffff"/>
<rect x="368" y="265" width="1" height="1" fill="#00ffff"/>
<rect x="369" y="265" width="1" height="1" fill="#00ffff"/>
<rect x="370" y="265" width="1" height="1" fill="#00ffff"/>
<rect x="371" y="265" width="1" height="1" fill="#00ffff"/>
<rect x="372" y="265" width="1" height="1" fill="#00ffff"/>
<rect x="373" y="265" width="1" height="1" fill="#00ffff"/>
<rect x="374" y="265" width="1" height="1" fill="#00ffff"/>
<rect x="375" y="265" width="1" height="1" fill="#00ffff"/>
<rect x="376" y="265" width="1" height="1" fill="#00ffff"/>
<rect x="377" y="265" width="1" height="1" fill="#00ffff"/>
<rect x="378" y="265" width="1" height="1" fill="#00ffff"/>
<rect x="379" y="265" width="1" height="1" fill="#00ffff"/>
<rect x="380" y="265" width="1" height="1" fill="#00ffff"/>
<rect x="381" y="265" width="1" height="1" fill="#00ffff"/>
<rect x="382" y="265" width="1" height="1" fill="#00ffff"/>
<rect x="383" y="234" width="1" height="32" fill="#00ffff"/>
<rect x="384" y="265" width="1" height="1" fill="#00ffff"/>
<rect x="385" y="264" width="1" height="2" fill="#00ffff"/>
<rect x="386" y="228" width="1" height="38" fill="#00ffff"/>
<rect x="387" y="264" width="1" height="2" fill="#00ffff"/>
<rect x="388" y="264" width="1" height="2" fill="#00ffff"/>
<rect x="389" y="264" width="1" height="2" fill="#00ffff"/>
<rect x="390" y="263" width="1" height="3" fill="#00ffff"/>
<rect x="391" y="263" width="1" height="3" fill="#00ffff"/>
<rect x="392" y="217" width="1" height="49" fill="#00ffff"/>
<rect x="393" y="263" width="1" height="3" fill="#00ffff"/>
<rect x="394" y="262" width="1" height="4" fill="#00ffff"/>
<rect x="395" y="261" width="1" height="5" fill="#00ffff"/>
<rect x="396" y="259" width="1" height="7" fill="#00ffff"/>
<rect x="397" y="260" width="1" height="6" fill="#00ffff"/>
<rect x="398" y="211" width="1" height="55" fill="#00ffff"/>
<rect x="399" y="261" width="1" height="5" fill="#00ffff"/>
<rect x="400" y="259" width="1" height="7" fill="#00ffff"/>
<rect x="401" y="258" width="1" height="8" fill="#00ffff"/>
<rect x="402" y="262" width="1" height="4" fill="#00ffff"/>
<rect x="403" y="264" width="1" height="2" fill="#00ffff"/>
<rect x="404" y="264" width="1" height="2" fill="#00ffff"/>
<rect x="405" y="263" width="1" height="3" fill="#00ffff"/>
<rect x="406" y="263" width="1" height="3" fill="#00ffff"/>
<rect x="407" y="262" width="1" height="4" fill="#00ffff"/>
<rect x="408" y="261" width="1" height="5" fill="#00ffff"/>
<rect x="409" y="261" width="1" height="5" fill="#00ffff"/>
<rect x="410" y="259" width="1" height="7" fill="#00ffff"/>
<rect x="411" y="260" width="1" height="6" fill="#00ffff"/>
<rect x="412" y="259" width="1" height="7" fill="#00ffff"/>
<rect x="413" y="261" width="1" height="5" fill="#00ffff"/>
<rect x="414" y="257" width="1" height="9" fill="#00ffff"/>
<rect x="415" y="214" width="1" height="52" fill="#00ffff"/>
<rect x="416" y="249" width="1" height="17" fill="#00ffff"/>
<rect x="417" y="255" width="1" height="11" fill="#00ffff"/>
<rect x="418" y="257" width="1" height="9" fill="#00ffff"/>
<rect x="419" y="252" width="1" height="14" fill="#00ffff"/>
<rect x="420" y="251" width="1" height="15" fill="#00ffff"/>
<rect x="421" y="253" width="1" height="13" fill="#00ffff"/>
<rect x="422" y="254" width="1" height="12" fill="#00ffff"/>
<rect x="423" y="256" width="1" height="10" fill="#00ffff"/>
<rect x="424" y="215" width="1" height="51" fill="#00ffff"/>
<rect x="425" y="252" width="1" height="14" fill="#00ffff"/>
<rect x="426" y="252" width="1" height="14" fill="#00ffff"/>
<rect x="427" y="195" width="1" height="71" fill="#00ffff"/>
<rect x="428" y="252" width="1" height="14" fill="#00ffff"/>
<rect x="429" y="248" width="1" height="18" fill="#00ffff"/>
<rect x="430" y="249" width="1" height="17" fill="#00ffff"/>
<rect x="431" y="244" width="1" height="22" fill="#00ffff"/>
<rect x="432" y="249" width="1" height="17" fill="#00ffff"/>
<rect x="433" y="257" width="1" height="9" fill="#00ffff"/>
<rect x="434" y="260" width="1" height="6" fill="#00ffff"/>
<rect x="435" y="253" width="1" height="13" fill="#00ffff"/>
<rect x="436" y="253" width="1" height="13" fill="#00ffff"/>
<rect x="437" y="246" width="1" height="20" fill="#00ffff"/>
<rect x="438" y="239" width="1" height="27" fill="#00ffff"/>
<rect x="439" y="247" width="1" height="19" fill="#00ffff"/>
<rect x="440" y="236" width="1" height="30" fill="#00ffff"/>
<rect x="441" y="240" width="1" height="26" fill="#00ffff"/>
<rect x="442" y="253" width="1" height="13" fill="#00ffff"/>
<rect x="443" y="253" width="1" height="13" fill="#00ffff"/>
<rect x="444" y="244" width="1" height="22" fill="#00ffff"/>
<rect x="445" y="239" width="1" height="27" fill="#00ffff"/>
<rect x="446" y="239" width="1" height="27" fill="#00ffff"/>
<rect x="447" y="206" width="1" height="60" fill="#00ffff"/>
<rect x="448" y="238" width="1" height="28" fill="#00ffff"/>
<rect x="449" y="212" width="1" height="54" fill="#00ffff"/>
<rect x="450" y="248" width="1" height="18" fill="#00ffff"/>
<rect x="451" y="252" width="1" height="14" fill="#00ffff"/>
<rect x="452" y="256" width="1" height="10" fill="#00ffff"/>
</g>
<g shape-rendering="crispEdges"><rect x="48" y="232" width="292" height="1" fill="#00dc00"/><rect x="48" y="233" width="1" height="2" fill="#00dc00"/><rect x="343" y="232" width="108" height="1" fill="#00dc00"/></g>
<polyline fill="none" stroke="#00dc00" stroke-width="1" points="339.5,232.5 340.5,232.5 341.5,230 342.5,232.8 343.5,232.5"/>
<rect x="452.700" y="132" width="1.400" height="134.500" fill="#dadada"/>
<text x="41.7" y="241.7" text-anchor="end">200</text>
<text x="41.7" y="215.0" text-anchor="end">400</text>
<text x="41.7" y="188.3" text-anchor="end">600</text>
<text x="41.7" y="161.6" text-anchor="end">800</text>
<text x="41.7" y="134.9" text-anchor="end">1000</text>
<rect x="466" y="266" width="5" height="1" fill="#0000ff"/>
<rect x="466" y="257" width="2" height="1" fill="#0000ff"/>
<rect x="466" y="249" width="5" height="1" fill="#0000ff"/>
<rect x="466" y="240" width="2" height="1" fill="#0000ff"/>
<rect x="466" y="232" width="5" height="1" fill="#0000ff"/>
<rect x="466" y="224" width="2" height="1" fill="#0000ff"/>
<rect x="466" y="215" width="5" height="1" fill="#0000ff"/>
<rect x="466" y="207" width="2" height="1" fill="#0000ff"/>
<rect x="466" y="199" width="5" height="1" fill="#0000ff"/>
<rect x="466" y="190" width="2" height="1" fill="#0000ff"/>
<rect x="466" y="182" width="5" height="1" fill="#0000ff"/>
<rect x="466" y="174" width="2" height="1" fill="#0000ff"/>
<rect x="466" y="165" width="5" height="1" fill="#0000ff"/>
<rect x="466" y="157" width="2" height="1" fill="#0000ff"/>
<rect x="466" y="149" width="5" height="1" fill="#0000ff"/>
<rect x="466" y="140" width="2" height="1" fill="#0000ff"/>
<rect x="466" y="132" width="5" height="1" fill="#0000ff"/>
<text x="471.5" y="251.2">2</text>
<text x="471.5" y="234.5">4</text>
<text x="471.5" y="217.8">6</text>
<text x="471.5" y="201.1">8</text>
<text x="471.5" y="184.5">10</text>
<text x="471.5" y="167.8">12</text>
<text x="471.5" y="151.1">14</text>
<text x="471.5" y="134.4">16</text>
<text x="49.9" y="278.6" text-anchor="middle">0.0</text>
<text x="96.3" y="278.6" text-anchor="middle">0.5</text>
<text x="142.7" y="278.6" text-anchor="middle">1.0</text>
<text x="189.1" y="278.6" text-anchor="middle">1.5</text>
<text x="235.5" y="278.6" text-anchor="middle">2.0</text>
<text x="281.9" y="278.6" text-anchor="middle">2.5</text>
<text x="328.3" y="278.6" text-anchor="middle">3.0</text>
<text x="374.7" y="278.6" text-anchor="middle">3.5</text>
<text x="421.1" y="278.6" text-anchor="middle">4.0</text>
<text x="468.3" y="278.6" text-anchor="middle">4.5</text>
<g shape-rendering="crispEdges">
<rect x="54" y="427" width="1" height="1" fill="#80ff00"/>
<rect x="63" y="427" width="1" height="1" fill="#80ff00"/>
<rect x="66" y="427" width="1" height="1" fill="#a0ff00"/>
<rect x="87" y="427" width="1" height="1" fill="#80ff00"/>
<rect x="92" y="427" width="2" height="1" fill="#60e000"/>
<rect x="96" y="427" width="1" height="1" fill="#80ff00"/>
<rect x="99" y="427" width="2" height="1" fill="#a0ff00"/>
<rect x="104" y="427" width="1" height="1" fill="#80ff00"/>
<rect x="116" y="427" width="1" height="1" fill="#80ff00"/>
<rect x="120" y="427" width="1" height="1" fill="#80ff00"/>
<rect x="123" y="427" width="1" height="1" fill="#80ff00"/>
<rect x="145" y="426" width="1" height="2" fill="#a0ff00"/>
<rect x="149" y="427" width="1" height="1" fill="#a0ff00"/>
<rect x="151" y="426" width="1" height="2" fill="#80ff00"/>
<rect x="165" y="426" width="2" height="2" fill="#80ff00"/>
<rect x="176" y="427" width="2" height="1" fill="#60e000"/>
<rect x="181" y="426" width="1" height="2" fill="#80ff00"/>
<rect x="201" y="427" width="1" height="1" fill="#80ff00"/>
<rect x="203" y="427" width="1" height="1" fill="#80ff00"/>
<rect x="212" y="427" width="1" height="1" fill="#a0ff00"/>
<rect x="225" y="427" width="1" height="1" fill="#60e000"/>
<rect x="228" y="427" width="1" height="1" fill="#80ff00"/>
<rect x="235" y="427" width="1" height="1" fill="#80ff00"/>
<rect x="239" y="426" width="1" height="2" fill="#80ff00"/>
<rect x="244" y="427" width="1" height="1" fill="#80ff00"/>
<rect x="265" y="427" width="1" height="1" fill="#80ff00"/>
<rect x="270" y="427" width="1" height="1" fill="#a0ff00"/>
<rect x="275" y="427" width="1" height="1" fill="#60e000"/>
<rect x="280" y="426" width="1" height="2" fill="#80ff00"/>
<rect x="282" y="427" width="1" height="1" fill="#80ff00"/>
<rect x="288" y="427" width="1" height="1" fill="#60e000"/>
<rect x="290" y="427" width="1" height="1" fill="#a0ff00"/>
<rect x="295" y="427" width="1" height="1" fill="#60e000"/>
<rect x="305" y="427" width="2" height="1" fill="#80ff00"/>
<rect x="310" y="427" width="1" height="1" fill="#60e000"/>
<rect x="313" y="427" width="1" height="1" fill="#80ff00"/>
<rect x="320" y="426" width="1" height="2" fill="#a0ff00"/>
<rect x="322" y="427" width="1" height="1" fill="#80ff00"/>
<rect x="327" y="426" width="1" height="2" fill="#60e000"/>
<rect x="332" y="427" width="1" height="1" fill="#80ff00"/>
<rect x="343" y="427" width="2" height="1" fill="#60e000"/>
<rect x="351" y="427" width="1" height="1" fill="#60e000"/>
<rect x="364" y="427" width="1" height="1" fill="#a0ff00"/>
<rect x="369" y="427" width="1" height="1" fill="#a0ff00"/>
<rect x="372" y="427" width="1" height="1" fill="#80ff00"/>
<rect x="374" y="427" width="1" height="1" fill="#60e000"/>
<rect x="379" y="427" width="1" height="1" fill="#80ff00"/>
<rect x="384" y="427" width="2" height="1" fill="#a0ff00"/>
<rect x="388" y="427" width="2" height="1" fill="#60e000"/>
<rect x="390" y="427" width="1" height="1" fill="#a0ff00"/>
<rect x="392" y="427" width="1" height="1" fill="#80ff00"/>
<rect x="395" y="427" width="1" height="1" fill="#80ff00"/>
<rect x="397" y="427" width="1" height="1" fill="#a0ff00"/>
<rect x="405" y="427" width="2" height="1" fill="#80ff00"/>
<rect x="414" y="427" width="1" height="1" fill="#80ff00"/>
<rect x="422" y="427" width="1" height="1" fill="#80ff00"/>
<rect x="428" y="427" width="1" height="1" fill="#80ff00"/>
<rect x="431" y="427" width="1" height="1" fill="#a0ff00"/>
<rect x="439" y="427" width="1" height="1" fill="#80ff00"/>
<rect x="449" y="427" width="1" height="1" fill="#a0ff00"/>
<rect x="351" y="425" width="1" height="3" fill="#ffff00"/>
<rect x="353" y="427" width="1" height="1" fill="#ffff00"/>
<rect x="357" y="427" width="1" height="1" fill="#ffff00"/>
<rect x="383" y="426" width="1" height="2" fill="#ffff00"/>
<rect x="386" y="427" width="1" height="1" fill="#ffff00"/>
<rect x="388" y="427" width="1" height="1" fill="#ffe000"/>
<rect x="389" y="424" width="1" height="4" fill="#c0ff00"/>
<rect x="390" y="426" width="1" height="2" fill="#c0ff00"/>
<rect x="391" y="427" width="1" height="1" fill="#ffff00"/>
<rect x="392" y="424" width="1" height="4" fill="#ffe000"/>
<rect x="394" y="426" width="1" height="2" fill="#c0ff00"/>
<rect x="395" y="427" width="1" height="1" fill="#ffe000"/>
<rect x="401" y="426" width="1" height="2" fill="#c0ff00"/>
<rect x="403" y="425" width="1" height="3" fill="#ffe000"/>
<rect x="410" y="426" width="1" height="2" fill="#c0ff00"/>
<rect x="411" y="426" width="1" height="2" fill="#ffff00"/>
<rect x="412" y="425" width="1" height="3" fill="#ffff00"/>
<rect x="413" y="426" width="1" height="2" fill="#ffe000"/>
<rect x="414" y="427" width="1" height="1" fill="#ffe000"/>
<rect x="417" y="426" width="1" height="2" fill="#c0ff00"/>
<rect x="418" y="427" width="1" height="1" fill="#c0ff00"/>
<rect x="419" y="427" width="1" height="1" fill="#c0ff00"/>
<rect x="420" y="425" width="1" height="3" fill="#ffe000"/>
<rect x="421" y="425" width="1" height="3" fill="#ffff00"/>
<rect x="425" y="427" width="1" height="1" fill="#c0ff00"/>
<rect x="426" y="426" width="1" height="2" fill="#ffe000"/>
<rect x="430" y="426" width="1" height="2" fill="#ffe000"/>
<rect x="437" y="426" width="1" height="2" fill="#c0ff00"/>
<rect x="438" y="427" width="1" height="1" fill="#ffe000"/>
<rect x="440" y="426" width="1" height="2" fill="#ffff00"/>
<rect x="256" y="426" width="1" height="2" fill="#c0ff00"/>
<rect x="258" y="427" width="1" height="1" fill="#ffff00"/>
<rect x="406" y="426" width="1" height="2" fill="#ff0040"/>
<rect x="407" y="425" width="1" height="3" fill="#ff18b0"/>
<rect x="408" y="422" width="1" height="6" fill="#ff0040"/>
<rect x="409" y="419" width="1" height="9" fill="#ff0040"/>
<rect x="410" y="419" width="1" height="9" fill="#ff20c0"/>
<rect x="411" y="417" width="1" height="11" fill="#ff1493"/>
<rect x="412" y="421" width="1" height="7" fill="#ff0040"/>
<rect x="413" y="423" width="1" height="5" fill="#ff30d0"/>
<rect x="414" y="417" width="1" height="11" fill="#ff0048"/>
<rect x="415" y="417" width="1" height="11" fill="#ff0070"/>
<rect x="416" y="419" width="1" height="9" fill="#ff0040"/>
<rect x="417" y="412" width="1" height="16" fill="#ff20c0"/>
<rect x="418" y="416" width="1" height="12" fill="#ff0048"/>
<rect x="419" y="420" width="1" height="8" fill="#ff1493"/>
<rect x="420" y="416" width="1" height="12" fill="#ff0040"/>
<rect x="421" y="416" width="1" height="12" fill="#ff20c0"/>
<rect x="422" y="419" width="1" height="9" fill="#ff18b0"/>
<rect x="423" y="413" width="1" height="15" fill="#ff20c0"/>
<rect x="424" y="411" width="1" height="17" fill="#ff18b0"/>
<rect x="425" y="404" width="1" height="24" fill="#ff1493"/>
<rect x="426" y="406" width="1" height="22" fill="#ff1493"/>
<rect x="427" y="408" width="1" height="20" fill="#ff0048"/>
<rect x="428" y="404" width="1" height="24" fill="#ff0040"/>
<rect x="429" y="404" width="1" height="24" fill="#ff30d0"/>
<rect x="430" y="401" width="1" height="27" fill="#ff1493"/>
<rect x="431" y="398" width="1" height="30" fill="#ff0070"/>
<rect x="432" y="406" width="1" height="22" fill="#ff18b0"/>
<rect x="433" y="408" width="1" height="20" fill="#ff30d0"/>
<rect x="434" y="414" width="1" height="14" fill="#ff0048"/>
<rect x="435" y="412" width="1" height="16" fill="#ff0070"/>
<rect x="436" y="410" width="1" height="18" fill="#ff18b0"/>
<rect x="437" y="418" width="1" height="10" fill="#ff18b0"/>
<rect x="438" y="415" width="1" height="13" fill="#ff0040"/>
<rect x="439" y="393" width="1" height="35" fill="#ff1493"/>
<rect x="440" y="387" width="1" height="41" fill="#ff0040"/>
<rect x="441" y="411" width="1" height="17" fill="#ff0040"/>
<rect x="442" y="404" width="1" height="24" fill="#ff0070"/>
<rect x="443" y="403" width="1" height="25" fill="#ff0040"/>
<rect x="444" y="407" width="1" height="21" fill="#ff18b0"/>
<rect x="445" y="405" width="1" height="23" fill="#ff0070"/>
<rect x="446" y="400" width="1" height="28" fill="#ff18b0"/>
<rect x="447" y="389" width="1" height="39" fill="#ff20c0"/>
<rect x="448" y="382" width="1" height="46" fill="#ff1493"/>
<rect x="449" y="393" width="1" height="35" fill="#ff1493"/>
<rect x="450" y="393" width="1" height="35" fill="#ff20c0"/>
<rect x="451" y="414" width="1" height="14" fill="#ff30d0"/>
<rect x="452" y="415" width="1" height="13" fill="#ff30d0"/>
<rect x="357" y="409" width="1" height="19" fill="#ff30a0"/>
<rect x="383" y="402" width="1" height="26" fill="#ff2080"/>
<rect x="386" y="382" width="1" height="46" fill="#ff2090"/>
<rect x="392" y="383" width="1" height="45" fill="#ff2090"/>
<rect x="395" y="415" width="1" height="13" fill="#ff2090"/>
<rect x="398" y="376" width="1" height="52" fill="#ff1818"/>
<rect x="401" y="413" width="1" height="15" fill="#ff2090"/>
<rect x="403" y="419" width="1" height="9" fill="#ff2060"/>
<rect x="415" y="376" width="1" height="52" fill="#ff1030"/>
<rect x="424" y="378" width="1" height="50" fill="#ff20a0"/>
<rect x="427" y="316" width="1" height="112" fill="#ff1030"/>
<rect x="449" y="369" width="1" height="59" fill="#ff1070"/>
<rect x="389" y="420" width="1" height="8" fill="#ff2090"/>
</g>
<polyline fill="none" stroke="#ff28ff" stroke-width="1.05" stroke-linejoin="round" points="48.5,364.5 49.5,366.0 50.6,368.1 51.6,367.3 52.7,368.3 53.7,367.5 54.8,369.3 55.8,370.3 56.9,367.5 57.9,369.4 59.0,370.2 60.0,368.8 61.1,368.3 62.1,366.2 63.2,366.8 64.2,369.5 65.3,368.3 66.3,367.8 67.4,368.4 68.4,367.6 69.5,366.5 70.5,368.8 71.6,371.5 72.6,368.0 73.7,368.8 74.7,369.1 75.8,370.4 76.8,368.2 77.9,371.6 78.9,368.4 80.0,370.3 81.0,372.6 82.1,372.5 83.1,370.0 84.2,369.9 85.2,369.7 86.3,370.8 87.3,372.3 88.4,370.1 89.4,371.8 90.5,370.2 91.5,369.8 92.6,369.9 93.6,368.7 94.7,370.9 95.7,369.6 96.8,370.3 97.8,369.8 98.9,367.6 99.9,368.4 101.0,370.9 102.0,370.9 103.1,371.5 104.1,368.5 105.2,367.8 106.2,371.7 107.3,369.3 108.3,367.3 109.4,370.9 110.4,369.8 111.5,370.4 112.5,371.7 113.6,368.5 114.6,368.7 115.7,367.2 116.7,366.5 117.8,368.4 118.8,370.2 119.9,364.0 120.9,367.7 122.0,362.5 123.0,368.8 124.1,369.0 125.1,368.4 126.2,369.1 127.2,370.0 128.3,370.4 129.3,369.9 130.4,368.2 131.4,368.7 132.5,367.3 133.5,372.1 134.6,363.5 135.6,369.0 136.7,368.4 137.7,369.5 138.8,372.3 139.8,371.8 140.9,370.1 141.9,370.8 143.0,369.4 144.0,371.3 145.1,370.3 146.1,370.3 147.2,368.5 148.2,369.8 149.3,368.2 150.4,370.2 151.4,370.2 152.5,369.7 153.5,368.8 154.6,370.8 155.6,371.6 156.7,368.7 157.7,371.5 158.8,371.3 159.8,373.8 160.9,371.1 161.9,371.6 163.0,373.0 164.0,370.4 165.1,369.7 166.1,371.7 167.2,370.6 168.2,369.2 169.3,368.8 170.3,370.2 171.4,372.4 172.4,372.2 173.5,370.6 174.5,369.2 175.6,368.7 176.6,368.6 177.7,369.9 178.7,369.5 179.8,368.8 180.8,367.7 181.9,367.6 182.9,368.8 184.0,369.1 185.0,370.3 186.1,369.3 187.1,369.4 188.2,369.1 189.2,369.4 190.3,372.0 191.3,368.8 192.4,368.2 193.4,370.7 194.5,371.0 195.5,370.9 196.6,372.0 197.6,368.3 198.7,369.2 199.7,368.9 200.8,369.3 201.8,369.4 202.9,370.8 203.9,368.1 205.0,369.0 206.0,370.3 207.1,370.7 208.1,368.8 209.2,367.7 210.2,369.4 211.3,369.5 212.3,369.3 213.4,371.0 214.4,372.8 215.5,371.8 216.5,372.2 217.6,371.4 218.6,371.9 219.7,371.2 220.7,372.3 221.8,373.1 222.8,369.8 223.9,371.5 224.9,371.9 226.0,373.2 227.0,370.2 228.1,370.4 229.1,371.0 230.2,370.4 231.2,371.7 232.3,370.4 233.3,371.2 234.4,369.6 235.4,369.5 236.5,370.0 237.5,370.1 238.6,370.4 239.6,368.9 240.7,369.7 241.7,371.3 242.8,370.6 243.8,371.5 244.9,371.8 245.9,371.5 247.0,371.2 248.0,368.1 249.1,369.4 250.1,368.6 251.2,367.1 252.2,366.5 253.3,367.8 254.3,367.3 255.4,367.2 256.4,364.5 257.5,364.6 258.5,366.3 259.6,365.0 260.6,362.5 261.7,365.3 262.7,360.8 263.8,365.3 264.8,364.6 265.9,363.6 266.9,365.1 268.0,364.3 269.0,364.5 270.1,364.8 271.1,363.5 272.2,364.7 273.2,364.5 274.3,367.0 275.3,365.3 276.4,365.2 277.4,364.4 278.5,365.4 279.5,365.0 280.6,366.8 281.6,364.4 282.7,364.5 283.7,366.7 284.8,364.5 285.8,363.8 286.9,364.5 287.9,363.6 289.0,366.4 290.0,367.4 291.1,367.2 292.1,365.1 293.2,366.3 294.2,365.7 295.3,366.1 296.3,365.9 297.4,365.5 298.4,367.9 299.5,368.0 300.5,365.1 301.6,363.7 302.6,364.5 303.7,365.6 304.7,364.6 305.8,364.3 306.8,363.7 307.9,364.3 308.9,364.9 310.0,365.4 311.0,363.3 312.1,363.0 313.1,364.5 314.2,362.8 315.2,360.5 316.3,361.7 317.3,362.9 318.4,363.0 319.4,362.1 320.5,363.5 321.5,364.8 322.6,361.0 323.6,362.3 324.7,363.3 325.7,363.6 326.8,364.2 327.8,364.9 328.9,362.9 329.9,361.1 331.0,363.2 332.0,361.7 333.1,361.7 334.1,362.2 335.2,361.4 336.2,363.2 337.3,364.2 338.3,362.3 339.4,361.5 340.4,361.4 341.5,362.3 342.5,361.6 343.6,364.7 344.6,363.5 345.7,363.3 346.7,364.0 347.8,364.5 348.8,365.5 349.9,363.7 350.9,365.3 352.0,365.5 353.0,366.6 354.1,365.9 355.1,367.9 356.2,365.9 357.2,366.6 358.3,363.5 359.3,365.4 360.4,364.6 361.4,364.8 362.5,363.0 363.5,365.3 364.6,364.8 365.6,365.7 366.7,363.0 367.7,363.7 368.8,366.6 369.8,363.9 370.9,364.2 371.9,364.7 373.0,363.1 374.0,365.0 375.1,367.7 376.1,365.3 377.2,359.4 378.2,360.7 379.3,361.7 380.3,361.8 381.4,362.1 382.4,356.0 383.5,360.1 384.5,356.9 385.6,356.9 386.6,356.4 387.7,352.7 388.7,354.9 389.8,357.8 390.8,353.7 391.9,353.8 392.9,351.8 394.0,350.5 395.0,351.4 396.1,351.7 397.1,348.5 398.2,353.9 399.2,350.6 400.3,353.3 401.3,355.3 402.4,349.1 403.4,355.1 404.5,354.7 405.5,355.5 406.6,354.4 407.6,355.1 408.7,354.0 409.7,351.3 410.8,356.3 411.8,356.8 412.9,350.1 413.9,352.4 415.0,334.5 416.0,354.8 417.1,354.3 418.1,354.4 419.2,354.3 420.2,359.6 421.3,356.2 422.3,354.9 423.4,355.0 424.4,353.5 425.5,352.7 426.5,360.2 427.6,347.0 428.6,358.8 429.7,359.0 430.7,350.7 431.8,354.7 432.8,350.8 433.9,356.1 434.9,360.6 436.0,357.7 437.0,360.7 438.1,355.5 439.1,356.3 440.2,357.4 441.2,358.9 442.3,351.2 443.3,356.5 444.4,353.3 445.4,349.0 446.5,335.0 447.5,327.2 448.6,347.0 449.6,356.6 450.7,357.2 451.7,349.0"/>
<rect x="452.700" y="294" width="1.400" height="134.500" fill="#dadada"/>
<text x="41.7" y="403.5" text-anchor="end">40</text>
<text x="41.7" y="376.8" text-anchor="end">80</text>
<text x="41.7" y="350.2" text-anchor="end">120</text>
<text x="41.7" y="323.5" text-anchor="end">160</text>
<text x="41.7" y="296.8" text-anchor="end">200</text>
<text x="471.5" y="403.0">4</text>
<text x="471.5" y="376.3">8</text>
<text x="471.5" y="349.7">12</text>
<text x="471.5" y="323.0">16</text>
<text x="471.5" y="296.3">20</text>
<text x="49.9" y="440.2" text-anchor="middle">0.0</text>
<text x="96.3" y="440.2" text-anchor="middle">0.5</text>
<text x="142.7" y="440.2" text-anchor="middle">1.0</text>
<text x="189.1" y="440.2" text-anchor="middle">1.5</text>
<text x="235.5" y="440.2" text-anchor="middle">2.0</text>
<text x="281.9" y="440.2" text-anchor="middle">2.5</text>
<text x="328.3" y="440.2" text-anchor="middle">3.0</text>
<text x="374.7" y="440.2" text-anchor="middle">3.5</text>
<text x="421.1" y="440.2" text-anchor="middle">4.0</text>
<text x="468.3" y="440.2" text-anchor="middle">4.5</text>
</svg>
<div class="grp" style="left:492px;top:126px;width:138px;height:83px;"></div>
<div class="gl t" style="left:498px;top:120px;color:#a03818;">Disc info</div>
<div class="t " style="left:500px;top:135px;">Type:</div><div class="t v" style="left:545px;top:135px;">DVD+R</div>
<div class="t " style="left:500px;top:152px;">ID:</div><div class="t v" style="left:545px;top:152px;">MCC 004</div>
<div class="t " style="left:500px;top:170px;">Date:</div><div class="t v" style="left:545px;top:170px;">8 Jan 2008</div>
<div class="t " style="left:500px;top:187px;">Label:</div>
<div class="abs" style="left:543px;top:189px;width:92px;height:8px;background:#000;border-radius:2px 4px 5px 2px;"></div>
<div class="abs" style="left:567px;top:197px;width:6px;height:1px;background:#00007f;"></div>
<div class="grp" style="left:492px;top:217px;width:138px;height:203px;"></div>
<div class="gl t" style="left:498px;top:211px;color:#a03818;">Settings</div>
<div class="edit" style="left:500px;top:226px;width:84px;height:21px;border-color:#7f9db9;"></div>
<div class="t " style="left:505px;top:231px;">4 X</div>
<div class="btn" style="left:566px;top:227px;width:18px;height:19px;border-color:#8a8a8a;border-radius:3px;"></div>
<svg class="abs" style="left:571px;top:236px" width="8" height="5"><path d="M0 0H7.400L3.700 4.500Z" fill="#46598a"/></svg>
<div class="abs" style="left:592px;top:225px;width:23px;height:23px;background:#f0f0f0;box-shadow:inset -1px -1px 0 #696969, inset -2px -2px 0 #a0a0a0, inset 1px 1px 0 #fff;"></div>
<svg class="abs" style="left:596px;top:228px" width="15" height="17" viewBox="0 0 15 17"><rect x="0.5" y="0.5" width="13.5" height="15.5" fill="#fff" stroke="#000"/><path d="M3.5 8V5.500h3.500" fill="none" stroke="#109010" stroke-width="1.3" stroke-dasharray="2 1"/><path d="M6.800 2.800L10 5.500L6.800 8.200Z" fill="#109010"/><path d="M10.800 8.500V11.500h-3" fill="none" stroke="#109010" stroke-width="1.3" stroke-dasharray="2 1"/><path d="M8 8.800L4.800 11.500L8 14.200Z" fill="#109010"/></svg>
<div class="t " style="left:502px;top:258px;">Start:</div>
<div class="edit" style="left:554px;top:252px;width:60px;height:20px;"></div><div class="t " style="left:558px;top:256px;">0000 MB</div>
<div class="t " style="left:502px;top:281px;">End:</div>
<div class="edit" style="left:554px;top:275px;width:60px;height:20px;"></div><div class="t " style="left:558px;top:279px;">4465 MB</div>
<div class="cb" style="left:502px;top:297px;"></div><div class="t " style="left:518.5px;top:298px;">Quick scan</div>
<div class="cb" style="left:502px;top:315px;"><svg width="13" height="13" viewBox="0 0 13 13" style="position:absolute;left:-1px;top:-1px"><path d="M3.2 6.300 L5.500 9.300 L9.800 3.200" fill="none" stroke="#3145ae" stroke-width="1.900"/></svg></div><div class="t " style="left:518.5px;top:316px;">Show C1/PIE</div>
<div class="cb" style="left:502px;top:330px;"><svg width="13" height="13" viewBox="0 0 13 13" style="position:absolute;left:-1px;top:-1px"><path d="M3.2 6.300 L5.500 9.300 L9.800 3.200" fill="none" stroke="#3145ae" stroke-width="1.900"/></svg></div><div class="t " style="left:518.5px;top:331px;">Show C2/PIF</div>
<div class="cb" style="left:502px;top:346px;"><svg width="13" height="13" viewBox="0 0 13 13" style="position:absolute;left:-1px;top:-1px"><path d="M3.2 6.300 L5.500 9.300 L9.800 3.200" fill="none" stroke="#3145ae" stroke-width="1.900"/></svg></div><div class="t " style="left:518.5px;top:347px;">Show jitter</div>
<div class="cb" style="left:502px;top:362px;"><svg width="13" height="13" viewBox="0 0 13 13" style="position:absolute;left:-1px;top:-1px"><path d="M3.2 6.300 L5.500 9.300 L9.800 3.200" fill="none" stroke="#3145ae" stroke-width="1.900"/></svg></div><div class="t " style="left:518.5px;top:363px;">Show read speed</div>
<div class="cb" style="left:502px;top:377px;"><svg width="13" height="13" viewBox="0 0 13 13" style="position:absolute;left:-1px;top:-1px"><path d="M3.2 6.300 L5.500 9.300 L9.800 3.200" fill="none" stroke="#b4b9c8" stroke-width="1.900"/></svg></div><div class="t " style="left:518.5px;top:378px;color:#a0a090;">Show write speed</div>
<div class="btn" style="left:528px;top:395px;width:97px;height:21px;"></div><div class="t v" style="left:528px;width:97px;text-align:center;top:400px;transform-origin:50% 50%;">Advanced</div>
<div class="grp" style="left:492px;top:426px;width:138px;height:26px;"></div>
<div class="t " style="left:502px;top:434px;">Quality score:</div><div class="t r v" style="right:24px;top:434px;">0</div>
<div class="grp" style="left:492px;top:458px;width:138px;height:56px;"></div>
<div class="t " style="left:502px;top:468px;">Progress:</div><div class="t r v" style="right:23.5px;top:468px;">100 %</div>
<div class="t " style="left:502px;top:484px;">Position:</div><div class="t r v" style="right:24.5px;top:484px;">4464 MB</div>
<div class="t " style="left:502px;top:499px;">Speed:</div><div class="t r v" style="right:23.5px;top:499px;">3.95 X</div>
<div class="grp2" style="left:14px;top:458px;width:147px;height:57px;"></div><div class="abs" style="left:22px;top:453px;width:13.5px;height:11px;background:#fff;"></div><div class="sw" style="left:24px;top:455px;background:#00ffff;width:6px;height:6px;"></div><div class="gl t" style="left:32.5px;top:452px;letter-spacing:-0.25px;">PI Errors</div>
<div class="t " style="left:22px;top:469px;">Average:</div><div class="t r v" style="right:495px;top:469px;">8.86</div>
<div class="t " style="left:22px;top:484px;letter-spacing:-0.45px;">Maximum:</div><div class="t r v" style="right:495px;top:484px;">527</div>
<div class="t " style="left:22px;top:498px;">Total:</div><div class="t r v" style="right:495px;top:498px;">158245</div>
<div class="grp2" style="left:172px;top:458px;width:147px;height:57px;"></div><div class="abs" style="left:180px;top:453px;width:14px;height:11px;background:#fff;"></div><div class="sw" style="left:182px;top:455px;background:#ffff00;width:6px;height:6px;"></div><div class="gl t" style="left:191px;top:452px;letter-spacing:-0.25px;">PI Failures</div>
<div class="t " style="left:181px;top:469px;">Average:</div><div class="t r v" style="right:335.5px;top:469px;">0.28</div>
<div class="t " style="left:181px;top:484px;letter-spacing:-0.45px;">Maximum:</div><div class="t r v" style="right:335.5px;top:484px;">168</div>
<div class="t " style="left:181px;top:498px;">Total:</div><div class="t r v" style="right:335.5px;top:498px;">39745</div>
<div class="grp2" style="left:331px;top:458px;width:147px;height:43px;"></div><div class="abs" style="left:339px;top:453px;width:12.5px;height:11px;background:#fff;"></div><div class="sw" style="left:341px;top:455px;background:#ff00ff;width:6px;height:6px;"></div><div class="gl t" style="left:348.5px;top:452px;letter-spacing:-0.25px;">Jitter</div>
<div class="t " style="left:340px;top:469px;">Average:</div><div class="t r v" style="right:176px;top:469px;">9.15 %</div>
<div class="t " style="left:340px;top:484px;letter-spacing:-0.45px;">Maximum:</div><div class="t r v" style="right:176px;top:484px;">14.9 %</div>
<div class="t " style="left:341px;top:502px;">PO failures:</div><div class="t r v" style="right:176.5px;top:502px;">-</div>
</body></html>
